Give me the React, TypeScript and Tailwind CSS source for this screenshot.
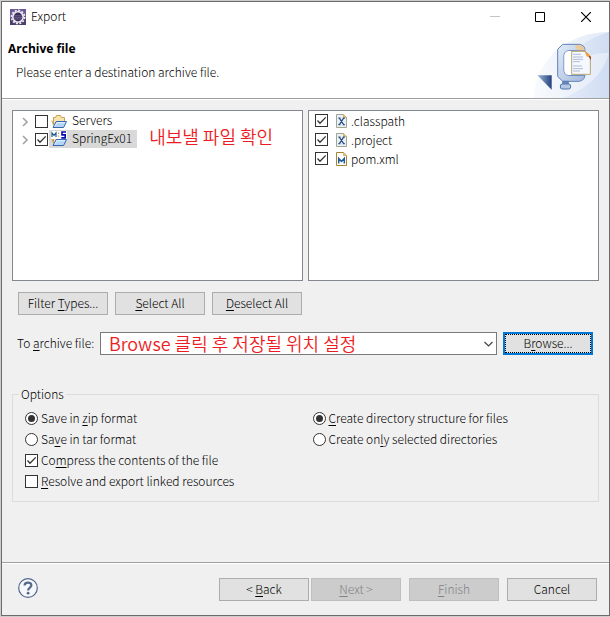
import type { ReactNode } from "react";

function Tick({ id, checked = false }: { id: string; checked?: boolean }) {
  return (
    <span className="grid size-[13px] shrink-0">
      <input
        id={id}
        type="checkbox"
        defaultChecked={checked}
        className="peer col-start-1 row-start-1 size-[13px] appearance-none border border-[#333] bg-white"
      />
      <svg
        viewBox="0 0 13 13"
        className="pointer-events-none invisible col-start-1 row-start-1 size-[13px] peer-checked:visible"
        fill="none"
        stroke="#333"
        strokeWidth="1.3"
      >
        <path d="M2.5 6.5 5 9.2 10.7 3.4" />
      </svg>
    </span>
  );
}

function Radio({ id, name, checked = false }: { id: string; name: string; checked?: boolean }) {
  return (
    <span className="grid size-[13px] shrink-0 place-items-center">
      <input
        id={id}
        type="radio"
        name={name}
        defaultChecked={checked}
        className="peer col-start-1 row-start-1 size-[13px] appearance-none rounded-full border border-[#333] bg-white"
      />
      <span className="pointer-events-none invisible col-start-1 row-start-1 size-[7px] rounded-full bg-[#333] peer-checked:visible" />
    </span>
  );
}

function Key({ children }: { children: ReactNode }) {
  return <span className="underline underline-offset-2">{children}</span>;
}

function Caption({ children }: { children: ReactNode }) {
  return <span className="pb-[2px]">{children}</span>;
}

function PushButton({ children, disabled = false }: { children: ReactNode; disabled?: boolean }) {
  return (
    <button
      type="button"
      disabled={disabled}
      className="h-[23px] w-[90px] border border-[#adadad] bg-[#e1e1e1] pb-[2px] whitespace-pre disabled:border-[#bfbfbf] disabled:bg-[#ccc] disabled:text-[#838383]"
    >
      {children}
    </button>
  );
}

function AppIcon() {
  return (
    <svg viewBox="0 0 16 16" className="size-4" aria-hidden="true">
      <rect width="16" height="16" fill="#6a5a94" />
      <rect y="9" width="16" height="7" fill="#4a3f6d" />
      <circle cx="8" cy="8" r="6.6" fill="none" stroke="#f0edf5" strokeWidth="1.6" strokeDasharray="2 1.455" />
      <circle cx="8" cy="8" r="5.2" fill="#3a315c" stroke="#f0edf5" strokeWidth="1.6" />
      <path d="M4 6.8h8M3.8 8.4h8.4M4.2 10h7.6" stroke="#7d739f" strokeWidth=".7" />
    </svg>
  );
}

function FolderIcon({ tagged = false }: { tagged?: boolean }) {
  return (
    <svg viewBox="0 0 16 16" className="size-4 shrink-0" aria-hidden="true">
      <path d="M2.5 12V4.5h2l1-2h4l1 2h3V9" fill="#f7e3ae" stroke="#c9a056" />
      <path d="M.8 7.5 2.5 12" stroke="#c9a056" />
      <path d="M2 14.5 5.2 8.5H15.5L12.6 14.5Z" fill="#b5d7f7" stroke="#3467b0" />
      <path d="M4 13.2 6 9.6h8.2" stroke="#e4f2ff" fill="none" />
      {tagged && (
        <g>
          <path d="M0 0h16v8H0z" fill="#fff" />
          <path d="M1 6V2l2 2.4L5 2v4" stroke="#1f5a8c" strokeWidth="1.2" fill="none" />
          <path d="M7.6 1.6v1.3M7.6 4.4v1.3" stroke="#c9a056" strokeWidth="1.2" />
          <path d="M15 1H11v2.9h3.2v3H10.3" stroke="#0a0ab4" strokeWidth="1.6" fill="none" />
        </g>
      )}
    </svg>
  );
}

function FileIcon({ kind }: { kind: "x" | "m" }) {
  const maven = kind === "m";
  return (
    <svg viewBox="0 0 12 14" className="h-[14px] w-3 shrink-0" aria-hidden="true">
      <path d="M.5.5H7.5L10.5 3.5V13.5H.5Z" fill={maven ? "#fff" : "#e8f0fa"} stroke={maven ? "#a8842c" : "#a3a68f"} />
      <path d="M7.5.5V3.5H10.5Z" fill="#edc979" stroke="#c9a65a" strokeWidth=".7" />
      {maven ? (
        <path d="M2.7 11.4V6.4L5.5 9.4 8.3 6.4v5" stroke="#1f5a96" strokeWidth="1.5" fill="none" />
      ) : (
        <path d="M3.4 4.2 7.6 10.6M7.6 4.2 3.4 10.6M2.4 4.2h2M6.8 4.2h2M2.4 10.7h2M6.8 10.7h2" stroke="#274b7c" strokeWidth="1.2" />
      )}
    </svg>
  );
}

function Expander({ label }: { label: string }) {
  return (
    <button type="button" aria-label={label} className="mt-[2px] grid w-[13px] shrink-0 place-items-center">
      <svg viewBox="0 0 6 10" className="h-[10px] w-[6px]" fill="none" stroke="#a6a6a6" strokeWidth="1.7">
        <path d="M1 1 5 5 1 9" />
      </svg>
    </button>
  );
}

function Banner() {
  return (
    <svg viewBox="222 96 225 198" className="h-[66px] w-[75px] shrink-0" aria-hidden="true">
      <defs>
        <linearGradient id="sky" x1="0" x2="1">
          <stop offset="0" stopColor="#f3f7fd" />
          <stop offset="1" stopColor="#cfdcf2" />
        </linearGradient>
        <linearGradient id="clamp" x1="0" x2="1" y1="0" y2="1">
          <stop offset="0" stopColor="#e3edf8" />
          <stop offset="1" stopColor="#a3b8dc" />
        </linearGradient>
        <linearGradient id="arrow" x1="0" x2="1">
          <stop offset="0" stopColor="#9db8da" />
          <stop offset="1" stopColor="#23427c" />
        </linearGradient>
      </defs>
      <path d="M222 294C226 180 320 98 447 96V294Z" fill="url(#sky)" />
      <path d="M222 294C226 180 320 98 447 96C360 125 345 150 338 190C350 175 390 160 447 158C430 220 390 260 310 294Z" fill="#fff" opacity=".4" />
      <path d="M232 226H275V269Z" fill="url(#arrow)" />
      <path
        d="M308 133H358Q375 135 375 152H326Q312 154 312 168V210Q312 224 326 226H375Q374 240 358 244H308L293 229V148Z"
        fill="url(#clamp)"
        stroke="#5f82ba"
        strokeWidth="3"
      />
      <path d="M345 135H358Q373 138 374 151H352Z" fill="#ecc99a" />
      <path d="M326 153H335V225H326Q313 223 313 210V168Q313 155 326 153Z" fill="#fff" />
      <path d="M308 244H325V254H308Z" fill="#6c8bbf" stroke="#47699f" strokeWidth="2" />
      <rect x="301" y="252" width="31" height="15" rx="6" fill="#b4c8e6" stroke="#5275ac" strokeWidth="3" />
      <path d="M335 154H376L391 169V223H335Z" fill="#f5f8fd" stroke="#b5a775" strokeWidth="3" />
      <path d="M375 153 393 171V181L385 169Z" fill="#9b4e1b" />
      <path d="M374 153 392 167 380 170Z" fill="#f2a04a" />
      <path d="M339 163H363M339 171H369M339 178H369M339 185H360M339 198H366M339 206H369M339 213H360" stroke="#aebbdb" strokeWidth="3" />
    </svg>
  );
}

const tree = [
  { id: "servers", label: "Servers", checked: false, selected: false },
  { id: "spring", label: "SpringEx01", checked: true, selected: true },
];

const files = [
  { id: "classpath", label: ".classpath", kind: "x" as const },
  { id: "project", label: ".project", kind: "x" as const },
  { id: "pom", label: "pom.xml", kind: "m" as const },
];

export default function App() {
  return (
    <div className="flex min-h-screen flex-col bg-[#cdcdcd] pt-px pb-px pl-px font-['Noto_Sans_CJK_KR',sans-serif] text-[12px] leading-[18px] font-light text-black">
      <main className="flex flex-1 flex-col border border-[#6b6b6b] bg-[#f0f0f0]">
        <div className="flex h-[30px] items-center bg-white pl-2">
          <AppIcon />
          <h1 className="ml-[5px] flex-1 pb-[2px] font-light">Export</h1>
          <button type="button" aria-label="Minimize" disabled className="grid h-full w-[45px] place-items-center">
            <svg viewBox="0 0 10 10" className="size-[10px]" stroke="#c4c4c4"><path d="M0 4.5h10" /></svg>
          </button>
          <button type="button" aria-label="Maximize" className="grid h-full w-[46px] place-items-center">
            <svg viewBox="0 0 10 10" className="size-[10px]" fill="none" stroke="#000"><path d="M.5.5h9v9h-9z" /></svg>
          </button>
          <button type="button" aria-label="Close" className="grid h-full w-[46px] place-items-center">
            <svg viewBox="0 0 10 10" className="size-[10px]" stroke="#000" strokeWidth="1.2"><path d="M0 0 10 10M10 0 0 10" /></svg>
          </button>
        </div>

        <header className="flex justify-between border-b border-[#a0a0a0] bg-white pl-[6px]">
          <div className="flex flex-col gap-[5px] pt-2">
            <h2 className="font-['Open_Sans',sans-serif] font-bold">Archive file</h2>
            <p className="pl-2">Please enter a destination archive file.</p>
          </div>
          <Banner />
        </header>

        <form className="flex flex-1 flex-col border-t border-white" onSubmit={(e) => e.preventDefault()}>
          <div className="flex flex-col px-[10px] pt-[10px]">
            <div className="grid h-[171px] grid-cols-2 gap-[5px]">
              <div className="flex border border-[#828790] bg-white pt-px pl-[5px]">
                <ul>
                  {tree.map((item) => (
                    <li key={item.id} className="flex h-[18px] items-center">
                      <Expander label={`Expand ${item.label}`} />
                      <span className="ml-1 flex">
                        <Tick id={item.id} checked={item.checked} />
                      </span>
                      <label
                        htmlFor={item.id}
                        className={`ml-px flex h-[18px] items-center gap-[5px] pr-[5px] pl-[2px] ${item.selected ? "bg-[#d9d9d9]" : ""}`}
                      >
                        <FolderIcon tagged={item.selected} />
                        <Caption>{item.label}</Caption>
                      </label>
                    </li>
                  ))}
                </ul>
                <p className="mt-3 ml-3 text-[18px] leading-[24px] font-[350] text-[#ed1c24]">
                  내보낼 파일 확인
                </p>
              </div>
              <ul className="border border-[#828790] bg-white pl-[6px]">
                {files.map((file) => (
                  <li key={file.id}>
                    <label htmlFor={file.id} className="flex h-[19px] items-center">
                      <Tick id={file.id} checked />
                      <span className="mr-[3px] ml-2 flex">
                        <FileIcon kind={file.kind} />
                      </span>
                      {file.label}
                    </label>
                  </li>
                ))}
              </ul>
            </div>

            <div className="mt-[11px] flex gap-[7px] pl-[6px]">
              <PushButton>Filter <Key>T</Key>ypes...</PushButton>
              <PushButton><Key>S</Key>elect All</PushButton>
              <PushButton><Key>D</Key>eselect All</PushButton>
            </div>

            <div className="mt-[17px] flex items-center pr-[6px] pl-[5px]">
              <label htmlFor="archive" className="w-[83px] pb-[2px] whitespace-nowrap">
                To <Key>a</Key>rchive file:
              </label>
              <span className="grid h-[23px] flex-1">
                <select
                  id="archive"
                  className="col-start-1 row-start-1 h-[23px] w-full appearance-none border border-[#7a7a7a] bg-white pb-px pl-2 text-[18px] leading-[20px] font-[350] text-[#ed1c24]"
                >
                  <option>Browse 클릭 후 저장될 위치 설정</option>
                </select>
                <svg
                  viewBox="0 0 9 6"
                  className="pointer-events-none col-start-1 row-start-1 mr-1 h-[6px] w-[9px] self-center justify-self-end"
                  fill="none"
                  stroke="#444"
                  strokeWidth="1.2"
                >
                  <path d="M.5 1 4.5 5 8.5 1" />
                </svg>
              </span>
              <button type="button" className="ml-[6px] h-[23px] w-[90px] border-2 border-[#0078d7] bg-[#e1e1e1]">
                <span className="flex h-full items-center justify-center border border-dotted border-black">
                  <Caption>B<Key>r</Key>owse...</Caption>
                </span>
              </button>
            </div>

            <fieldset className="mt-[30px] grid h-[117px] grid-cols-2 content-start border border-[#dcdcdc] px-3 pt-[5px]">
              <legend className="-ml-[6px] px-[2px]">Options</legend>
              <div>
                <label htmlFor="zip" className="flex h-[21px] items-center gap-[3px]">
                  <Radio id="zip" name="format" checked />
                  <Caption>Save in <Key>z</Key>ip format</Caption>
                </label>
                <label htmlFor="tar" className="flex h-[21px] items-center gap-[3px]">
                  <Radio id="tar" name="format" />
                  <Caption>Sa<Key>v</Key>e in tar format</Caption>
                </label>
                <label htmlFor="compress" className="flex h-[21px] items-center gap-[3px]">
                  <Tick id="compress" checked />
                  <Caption>Co<Key>m</Key>press the contents of the file</Caption>
                </label>
                <label htmlFor="linked" className="flex h-[21px] items-center gap-[3px]">
                  <Tick id="linked" />
                  <Caption><Key>R</Key>esolve and export linked resources</Caption>
                </label>
              </div>
              <div className="pl-[7px]">
                <label htmlFor="structure" className="flex h-[21px] items-center gap-[3px]">
                  <Radio id="structure" name="directories" checked />
                  <Caption><Key>C</Key>reate directory structure for files</Caption>
                </label>
                <label htmlFor="selected" className="flex h-[21px] items-center gap-[3px]">
                  <Radio id="selected" name="directories" />
                  <Caption>Create on<Key>l</Key>y selected directories</Caption>
                </label>
              </div>
            </fieldset>
          </div>

          <footer className="mt-auto border-t border-[#a0a0a0]">
            <div className="flex items-start border-t border-white pt-[14px] pr-3 pb-[14px] pl-4">
              <button type="button" aria-label="Help" className="mr-auto">
                <svg viewBox="0 0 20 20" className="size-5" fill="none">
                  <circle cx="10" cy="10" r="9.3" fill="#f5f7fa" stroke="#55698c" strokeWidth="1.2" />
                  <path d="M6.6 7.6C6.6 3.6 13.4 3.7 13.4 7.3 13.4 9.6 10.1 9.6 10.1 12.6" stroke="#55698c" strokeWidth="2.2" />
                  <circle cx="10.1" cy="15.2" r="1.4" fill="#55698c" />
                </svg>
              </button>
              <div className="flex gap-2">
                <div className="flex gap-[2px]">
                  <PushButton>&lt; <Key>B</Key>ack</PushButton>
                  <PushButton disabled><Key>N</Key>ext &gt;</PushButton>
                </div>
                <PushButton disabled><Key>F</Key>inish</PushButton>
                <PushButton>Cancel</PushButton>
              </div>
            </div>
          </footer>
        </form>
      </main>
    </div>
  );
}
